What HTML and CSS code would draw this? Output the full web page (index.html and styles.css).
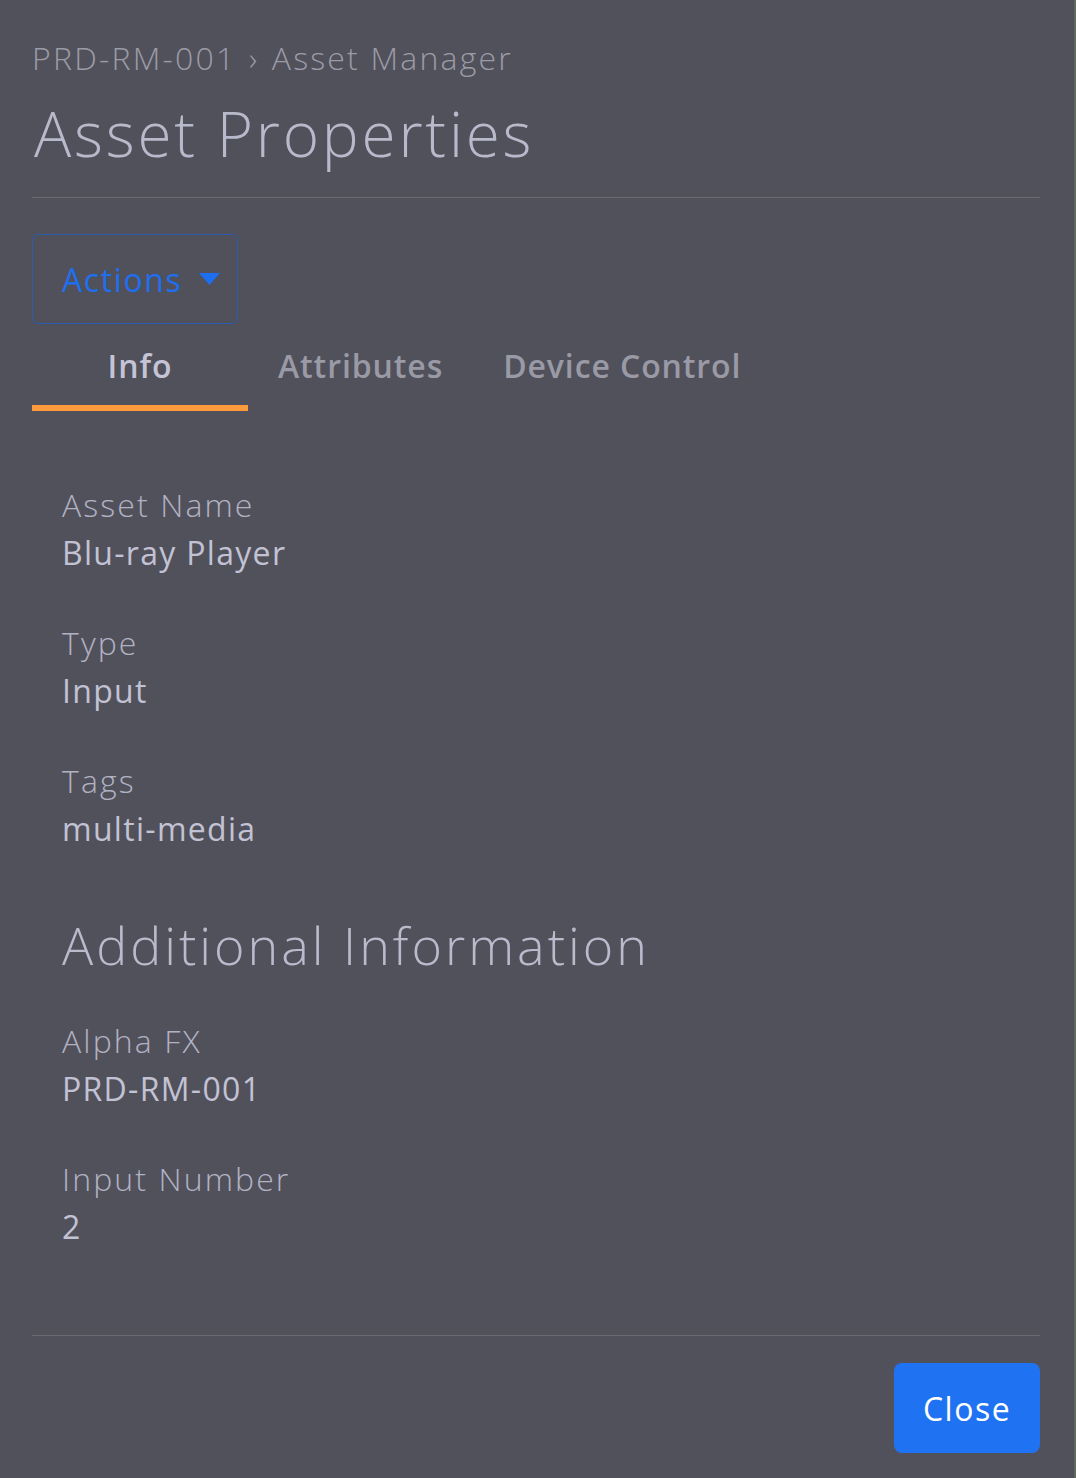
FILE: index.html
```html
<!DOCTYPE html>
<html lang="en">
<head>
  <meta charset="UTF-8">
  <meta name="viewport" content="width=device-width, initial-scale=1.0">
  <title>Asset Properties</title>
  <link rel="stylesheet" href="styles.css">
</head>
<body>
  <div class="page">
    <div class="breadcrumb">PRD-RM-001 <span class="sep">›</span> Asset Manager</div>
    <h1 class="title">Asset Properties</h1>
    <hr class="rule">

    <button class="actions">
      Actions
      <svg class="caret" width="21" height="12" viewBox="0 0 21 12"><path d="M0 0 H21 L10.5 12 Z" fill="#1e6ff0"/></svg>
    </button>

    <div class="tabs">
      <div class="tab active">Info</div>
      <div class="tab">Attributes</div>
      <div class="tab">Device Control</div>
    </div>

    <div class="details">
      <div class="field">
        <div class="label">Asset Name</div>
        <div class="value">Blu-ray Player</div>
      </div>
      <div class="field">
        <div class="label">Type</div>
        <div class="value">Input</div>
      </div>
      <div class="field">
        <div class="label">Tags</div>
        <div class="value">multi-media</div>
      </div>

      <h2 class="section">Additional Information</h2>

      <div class="field">
        <div class="label">Alpha FX</div>
        <div class="value">PRD-RM-001</div>
      </div>
      <div class="field">
        <div class="label">Input Number</div>
        <div class="value">2</div>
      </div>
    </div>

    <hr class="rule footer-rule">
    <div class="footer">
      <button class="close">Close</button>
    </div>
  </div>
</body>
</html>
```

FILE: styles.css
```css
html, body {
  margin: 0;
  background-color: #51515b;
}
body {
  font-family: "Open Sans", "Noto Sans", sans-serif;
  font-weight: 300;
  color: #b9b9cc;
  border-right: 2px solid #5d6a55;
  min-height: 1478px;
  box-sizing: border-box;
}
.page {
  padding: 38px 34px 0 32px;
}
.breadcrumb {
  font-size: 32px;
  line-height: 40px;
  letter-spacing: 2.2px;
  color: #9b9ba7;
}
.sep {
  margin: 0 2px;
}
.title {
  margin: 19px 0 0 2px;
  font-size: 62px;
  font-weight: 300;
  line-height: 72px;
  letter-spacing: 2.8px;
}
.rule {
  margin: 28px 0 0;
  border: none;
  border-top: 1px solid #69696f;
}
.actions {
  margin-top: 36px;
  width: 206px;
  height: 90px;
  padding: 0 0 0 29px;
  display: flex;
  align-items: center;
  gap: 17px;
  background: transparent;
  border: 1px solid #2c5cae;
  border-radius: 6px;
  font-family: inherit;
  font-weight: 400;
  font-size: 32px;
  letter-spacing: 1.6px;
  color: #1e6ff0;
}
.caret {
  flex: none;
}
.tabs {
  display: flex;
}
.tab {
  padding: 22px 30px 19px;
  font-size: 32px;
  line-height: 40px;
  font-weight: 600;
  letter-spacing: 0.9px;
  color: #9a9aa6;
  border-bottom: 6px solid transparent;
}
.tab.active {
  min-width: 216px;
  box-sizing: border-box;
  text-align: center;
  color: #c4c4d6;
  border-bottom-color: #ff9a3c;
}
.details {
  padding: 74px 0 0 30px;
}
.field + .field {
  margin-top: 50px;
}
.label {
  font-size: 32px;
  line-height: 40px;
  letter-spacing: 2.1px;
  color: #b2b2c4;
}
.value {
  margin-top: 8px;
  font-size: 32px;
  line-height: 40px;
  letter-spacing: 1.3px;
  font-weight: 400;
  color: #c2c2d4;
}
.section {
  margin: 66px 0 46px;
  font-size: 52px;
  font-weight: 300;
  line-height: 60px;
  letter-spacing: 3px;
  color: #babacd;
}
.footer-rule {
  margin-top: 88px;
}
.footer {
  display: flex;
  justify-content: flex-end;
  padding-top: 27px;
}
.close {
  width: 146px;
  height: 90px;
  border: none;
  border-radius: 8px;
  background-color: #1f72f1;
  color: #fff;
  font-family: inherit;
  font-size: 32px;
  font-weight: 400;
  letter-spacing: 1.5px;
}
```
